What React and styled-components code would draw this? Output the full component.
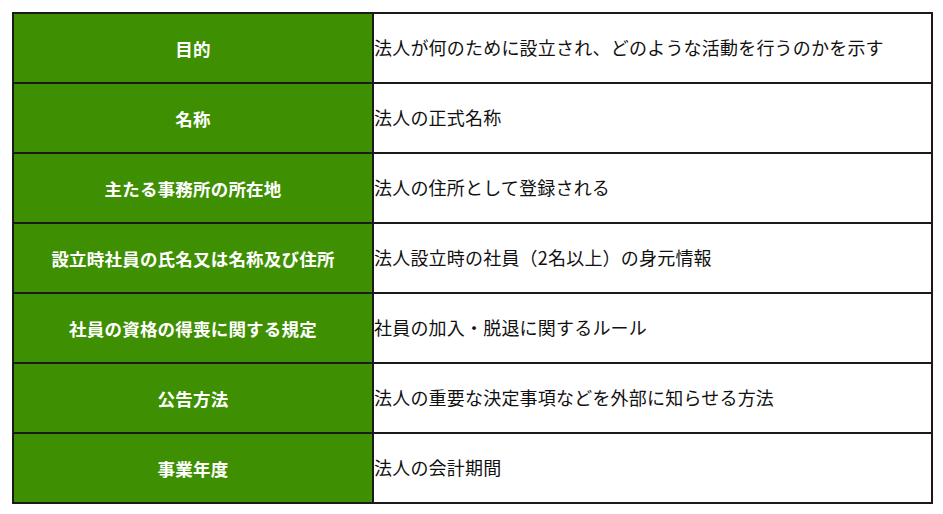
import React from "react";
import styled, { createGlobalStyle } from "styled-components";

const GlobalStyle = createGlobalStyle`
  body {
    margin: 0;
    background: #ffffff;
    font-family: "Noto Sans CJK JP", "Noto Sans", sans-serif;
  }
`;

const rows = [
  { label: "目的", text: "法人が何のために設立され、どのような活動を行うのかを示す" },
  { label: "名称", text: "法人の正式名称" },
  { label: "主たる事務所の所在地", text: "法人の住所として登録される" },
  { label: "設立時社員の氏名又は名称及び住所", text: "法人設立時の社員（2名以上）の身元情報" },
  { label: "社員の資格の得喪に関する規定", text: "社員の加入・脱退に関するルール" },
  { label: "公告方法", text: "法人の重要な決定事項などを外部に知らせる方法" },
  { label: "事業年度", text: "法人の会計期間" },
];

const App = () => {
  return (
    <Page>
      <GlobalStyle />
      <Table>
        <tbody>
          {rows.map((row) => (
            <Row key={row.label}>
              <Head>{row.label}</Head>
              <Cell>{row.text}</Cell>
            </Row>
          ))}
        </tbody>
      </Table>
    </Page>
  );
};

export default App;

const Page = styled.div`
  padding: 12px 10px 12px 12px;
`;

const Table = styled.table`
  width: 921px;
  border-collapse: collapse;
  table-layout: fixed;
`;

const Row = styled.tr`
  height: 70px;
`;

const Head = styled.th`
  width: 358px;
  background: #3f8f02;
  color: #ffffff;
  font-size: 17.5px;
  font-weight: 700;
  letter-spacing: 0.2px;
  text-align: center;
  border: 2px solid #1a1a1a;
  padding: 0;
`;

const Cell = styled.td`
  color: #111111;
  font-size: 18px;
  letter-spacing: 0.2px;
  border: 2px solid #1a1a1a;
  padding: 0 0 2px 0;
  text-align: left;
`;
